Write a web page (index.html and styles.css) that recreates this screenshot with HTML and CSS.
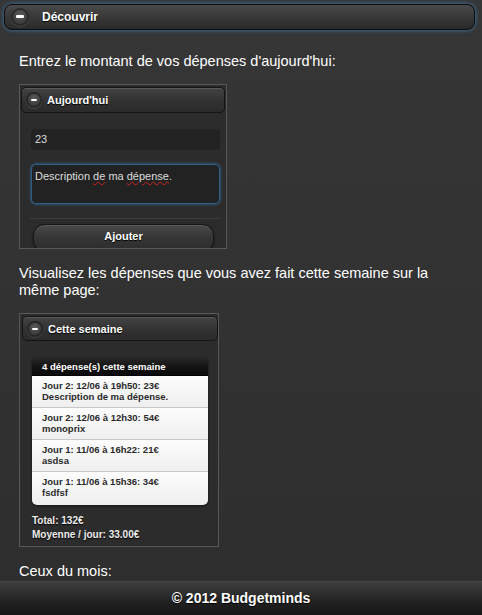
FILE: index.html
```html
<!DOCTYPE html>
<html lang="fr">
<head>
<meta charset="utf-8">
<title>Budgetminds</title>
<link rel="stylesheet" href="styles.css">
</head>
<body>
<div class="page">
  <div class="top-head">
    <span class="icon-minus big"></span>
    <span class="top-title">Découvrir</span>
  </div>
  <div class="content">
    <p class="para p1">Entrez le montant de vos dépenses d'aujourd'hui:</p>
    <div class="shot shot1">
      <div class="mini-head"><span class="icon-minus"></span><span>Aujourd'hui</span></div>
      <div class="field">23</div>
      <div class="area">Description <span class="spell">de</span> ma <span class="spell">dépense</span>.</div>
      <div class="sep"></div>
      <div class="btn">Ajouter</div>
    </div>
    <p class="para p2">Visualisez les dépenses que vous avez fait cette semaine sur la même page:</p>
    <div class="shot shot2">
      <div class="mini-head head2"><span class="icon-minus"></span><span>Cette semaine</span></div>
      <div class="list">
        <div class="list-head">4 dépense(s) cette semaine</div>
        <div class="item">Jour 2: 12/06 à 19h50: 23€<br>Description de ma dépense.</div>
        <div class="item">Jour 2: 12/06 à 12h30: 54€<br>monoprix</div>
        <div class="item">Jour 1: 11/06 à 16h22: 21€<br>asdsa</div>
        <div class="item last">Jour 1: 11/06 à 15h36: 34€<br>fsdfsf</div>
      </div>
      <div class="totals">Total: 132€<br>Moyenne / jour: 33.00€</div>
    </div>
    <p class="para p3">Ceux du mois:</p>
  </div>
  <div class="footer">© 2012 Budgetminds</div>
</div>
</body>
</html>
```
FILE: styles.css
```css
html, body {
  margin: 0;
  padding: 0;
}
body {
  background: #333;
  font-family: "Liberation Sans", Arial, sans-serif;
  color: #fff;
}
.page {
  width: 482px;
  height: 615px;
  display: flex;
  flex-direction: column;
  overflow: hidden;
  background: linear-gradient(#363636, #2e2e2e);
}
.top-head {
  flex: none;
  margin: 4px 7px 0 4px;
  height: 24px;
  border: 1px solid #0c0c0c;
  border-radius: 8px;
  background: linear-gradient(#4a4a4a, #3a3a3a 45%, #2a2a2a);
  box-shadow: 0 0 4px #3d7fb6;
  display: flex;
  align-items: center;
}
.icon-minus {
  flex: none;
  width: 12px;
  height: 12px;
  border-radius: 50%;
  background: radial-gradient(circle at 50% 35%, #5c5c5c, #2e2e2e);
  box-shadow: 0 0 0 2px rgba(0,0,0,0.45), 0 1px 1px 2px rgba(255,255,255,0.12);
  position: relative;
}
.icon-minus::after {
  content: "";
  position: absolute;
  left: 3px;
  top: 5px;
  width: 6px;
  height: 2px;
  background: #fff;
  border-radius: 1px;
}
.icon-minus.big {
  width: 14px;
  height: 14px;
  margin-left: 8px;
}
.icon-minus.big::after {
  left: 3px;
  top: 5px;
  width: 8px;
  height: 3px;
}
.top-title {
  margin-left: 15px;
  font-size: 12px;
  font-weight: bold;
  text-shadow: 0 1px 1px #000;
}
.content {
  flex: 1;
  overflow: hidden;
  padding: 0 19px;
}
.para {
  margin: 0;
  font-size: 14.5px;
  line-height: 17px;
}
.p1 { margin-top: 23px; }
.p2 { margin-top: 16px; }
.p3 { margin-top: 16px; }
.shot {
  box-sizing: border-box;
  border: 1px solid #585858;
  background: #2c2c2c;
  overflow: hidden;
  font-size: 10px;
  font-weight: bold;
}
.shot > * {
  flex: none;
}
.shot1 {
  width: 208px;
  height: 165px;
  margin-top: 14px;
  display: flex;
  flex-direction: column;
}
.mini-head {
  height: 24px;
  margin: 2px 1px 0 1px;
  border: 1px solid #141414;
  border-radius: 5px;
  background: linear-gradient(#434343, #333 50%, #2a2a2a);
  box-shadow: inset 0 1px 0 rgba(255,255,255,0.12);
  display: flex;
  align-items: center;
  font-size: 11px;
  color: #fff;
  text-shadow: 0 1px 1px #000;
}
.mini-head .icon-minus {
  margin-left: 6px;
  margin-right: 7px;
}
.field {
  margin: 16px 6px 0 11px;
  height: 21px;
  border-radius: 4px;
  background: #222;
  color: #ddd;
  font-weight: normal;
  font-size: 11px;
  line-height: 21px;
  padding-left: 4px;
}
.area {
  margin: 14px 6px 0 11px;
  border: 1px solid #2f5d85;
  border-radius: 5px;
  background: #222;
  box-shadow: 0 0 3px #3b78a8;
  color: #ddd;
  font-weight: normal;
  font-size: 11px;
  line-height: 13px;
  padding: 5px 3px 0;
  box-sizing: border-box;
  height: 40px;
}
.spell {
  text-decoration: underline wavy #c22;
  text-decoration-thickness: 1px;
  text-underline-offset: 1px;
}
.sep {
  margin: 14px 6px 0 10px;
  height: 1px;
  background: #3c3c3c;
}
.btn {
  margin: 5px 12px 0 13px;
  height: 26px;
  border: 1px solid #151515;
  border-radius: 12px;
  background: linear-gradient(#4a4a4a, #353535 50%, #2c2c2c);
  box-shadow: 0 1px 3px rgba(0,0,0,0.6), inset 0 1px 0 rgba(255,255,255,0.1);
  font-size: 11px;
  text-align: center;
  line-height: 22px;
  color: #fff;
  text-shadow: 0 1px 1px #000;
}
.shot2 {
  width: 200px;
  height: 234px;
  margin-top: 14px;
  display: flex;
  flex-direction: column;
}
.head2 {
  margin: 2px 0 0 2px;
  height: 23px;
}
.list {
  margin: 16px 10px 0 12px;
  border-radius: 5px;
  overflow: hidden;
  box-shadow: 0 1px 3px rgba(0,0,0,0.5);
}
.list-head {
  height: 19px;
  line-height: 19px;
  padding-left: 10px;
  background: linear-gradient(#2a2a2a, #111 60%, #0a0a0a);
  color: #fff;
  font-size: 9.5px;
  border-bottom: 1px solid #000;
  box-sizing: border-box;
}
.item {
  height: 32px;
  box-sizing: border-box;
  padding: 5px 0 0 10px;
  background: linear-gradient(#fdfdfd, #eeeeee);
  border-bottom: 1px solid #c8c8c8;
  color: #2a2a2a;
  font-size: 9.5px;
  line-height: 10.5px;
}
.item.last {
  height: 33px;
  border-bottom: none;
}
.totals {
  margin: 9px 0 0 12px;
  font-size: 10px;
  line-height: 14px;
  color: #eee;
  text-shadow: 0 1px 1px #000;
}
.footer {
  flex: none;
  height: 34px;
  box-sizing: border-box;
  border-top: 1px solid #444;
  background: linear-gradient(#3e3e3e, #222 60%, #161616);
  text-align: center;
  font-size: 14px;
  font-weight: bold;
  line-height: 33px;
  text-shadow: 0 1px 1px #000;
}
```
